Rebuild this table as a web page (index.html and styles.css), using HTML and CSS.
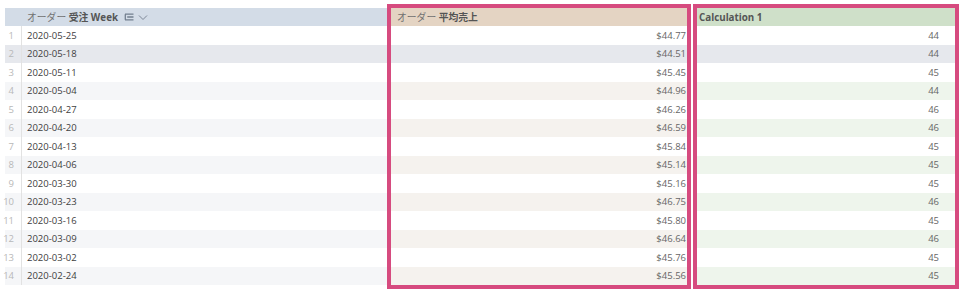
FILE: index.html
```html
<!DOCTYPE html>
<html lang="ja">
<head>
<meta charset="utf-8">
<link rel="stylesheet" href="styles.css">
</head>
<body>
<div class="page">
  <div class="group left">
    <div class="col rownum">
      <div class="hcell h1"></div>
      <div class="cell">1</div>
      <div class="cell hl">2</div>
      <div class="cell">3</div>
      <div class="cell alt">4</div>
      <div class="cell">5</div>
      <div class="cell alt">6</div>
      <div class="cell">7</div>
      <div class="cell alt">8</div>
      <div class="cell">9</div>
      <div class="cell alt">10</div>
      <div class="cell">11</div>
      <div class="cell alt">12</div>
      <div class="cell">13</div>
      <div class="cell alt">14</div>
    </div>
    <div class="col date">
      <div class="hcell h1"><span class="view">オーダー</span>&nbsp;<b>受注 Week</b>
        <svg class="ico" width="10" height="8" viewBox="0 0 10 8"><path d="M1 1.2h8.5M3.2 4h6.3M1 6.8h8.5M1.3 1.2v5.6" stroke="#737f8f" stroke-width="1.3" fill="none"/></svg>
        <svg class="chev" width="10" height="7" viewBox="0 0 10 7"><path d="M1 1.5l4 4 4-4" stroke="#7d8797" stroke-width="1" fill="none"/></svg>
      </div>
      <div class="cell">2020-05-25</div>
      <div class="cell hl">2020-05-18</div>
      <div class="cell">2020-05-11</div>
      <div class="cell alt">2020-05-04</div>
      <div class="cell">2020-04-27</div>
      <div class="cell alt">2020-04-20</div>
      <div class="cell">2020-04-13</div>
      <div class="cell alt">2020-04-06</div>
      <div class="cell">2020-03-30</div>
      <div class="cell alt">2020-03-23</div>
      <div class="cell">2020-03-16</div>
      <div class="cell alt">2020-03-09</div>
      <div class="cell">2020-03-02</div>
      <div class="cell alt">2020-02-24</div>
    </div>
  </div>
  <div class="group box box1">
    <div class="col num">
      <div class="hcell h2"><span class="view">オーダー</span>&nbsp;<b>平均売上</b></div>
      <div class="cell">$44.77</div>
      <div class="cell hl">$44.51</div>
      <div class="cell">$45.45</div>
      <div class="cell alt">$44.96</div>
      <div class="cell">$46.26</div>
      <div class="cell alt">$46.59</div>
      <div class="cell">$45.84</div>
      <div class="cell alt">$45.14</div>
      <div class="cell">$45.16</div>
      <div class="cell alt">$46.75</div>
      <div class="cell">$45.80</div>
      <div class="cell alt">$46.64</div>
      <div class="cell">$45.76</div>
      <div class="cell alt">$45.56</div>
    </div>
  </div>
  <div class="group box box2">
    <div class="col num">
      <div class="hcell h3"><b>Calculation 1</b></div>
      <div class="cell">44</div>
      <div class="cell hl">44</div>
      <div class="cell">45</div>
      <div class="cell alt">44</div>
      <div class="cell">46</div>
      <div class="cell alt">46</div>
      <div class="cell">45</div>
      <div class="cell alt">45</div>
      <div class="cell">45</div>
      <div class="cell alt">46</div>
      <div class="cell">45</div>
      <div class="cell alt">46</div>
      <div class="cell">45</div>
      <div class="cell alt">45</div>
    </div>
  </div>
</div>
</body>
</html>
```

FILE: styles.css
```css
* { box-sizing: border-box; }
html, body { margin: 0; padding: 0; background: #fff; }
body {
  font-family: "Open Sans", "Noto Sans CJK JP", sans-serif;
  font-size: 9.5px;
  color: #555;
  width: 960px;
  height: 292px;
  overflow: hidden;
}
.page {
  display: flex;
  align-items: flex-start;
  padding: 4px 0 0 5px;
}
.group { display: flex; }
.left { padding-top: 4px; width: 382px; }
.col { display: flex; flex-direction: column; }
.rownum { width: 17px; }
.date { flex: 1; }
.box {
  border: 4px solid #d64b7f;
}
.box1 { width: 304px; }
.box2 { width: 266px; margin-left: 2px; }
.box .col { flex: 1; }

.hcell {
  height: 18px;
  display: flex;
  align-items: center;
  white-space: nowrap;
  color: #666;
  font-size: 9.8px;
}
.hcell b { font-weight: 700; color: #555; }
.hcell .view { color: #707070; }
.h1 { background: #d3dce7; padding-left: 5px; }
.h2 { background: #e4d4c3; padding-left: 6px; }
.h3 { background: #cfe0c9; padding-left: 2px; }
.ico { margin-left: 6px; }
.chev { margin-left: 4px; }

.cell {
  height: 18.5px;
  display: flex;
  align-items: center;
  white-space: nowrap;
}
.rownum .cell {
  justify-content: flex-end;
  padding-right: 7px;
  color: #b8b8b8;
  border-right: 1px solid #e2e2e2;
}
.date .cell { padding-left: 5px; color: #404040; }
.num .cell { justify-content: flex-end; color: #666; }
.box1 .cell { padding-right: 1px; }
.box2 .cell { padding-right: 16px; }

.left .alt { background: #f5f6f8; }
.box1 .alt { background: #f5f2ee; }
.box2 .alt { background: #eef5ec; }
.cell.hl { background: #e6e8ed; }
```
